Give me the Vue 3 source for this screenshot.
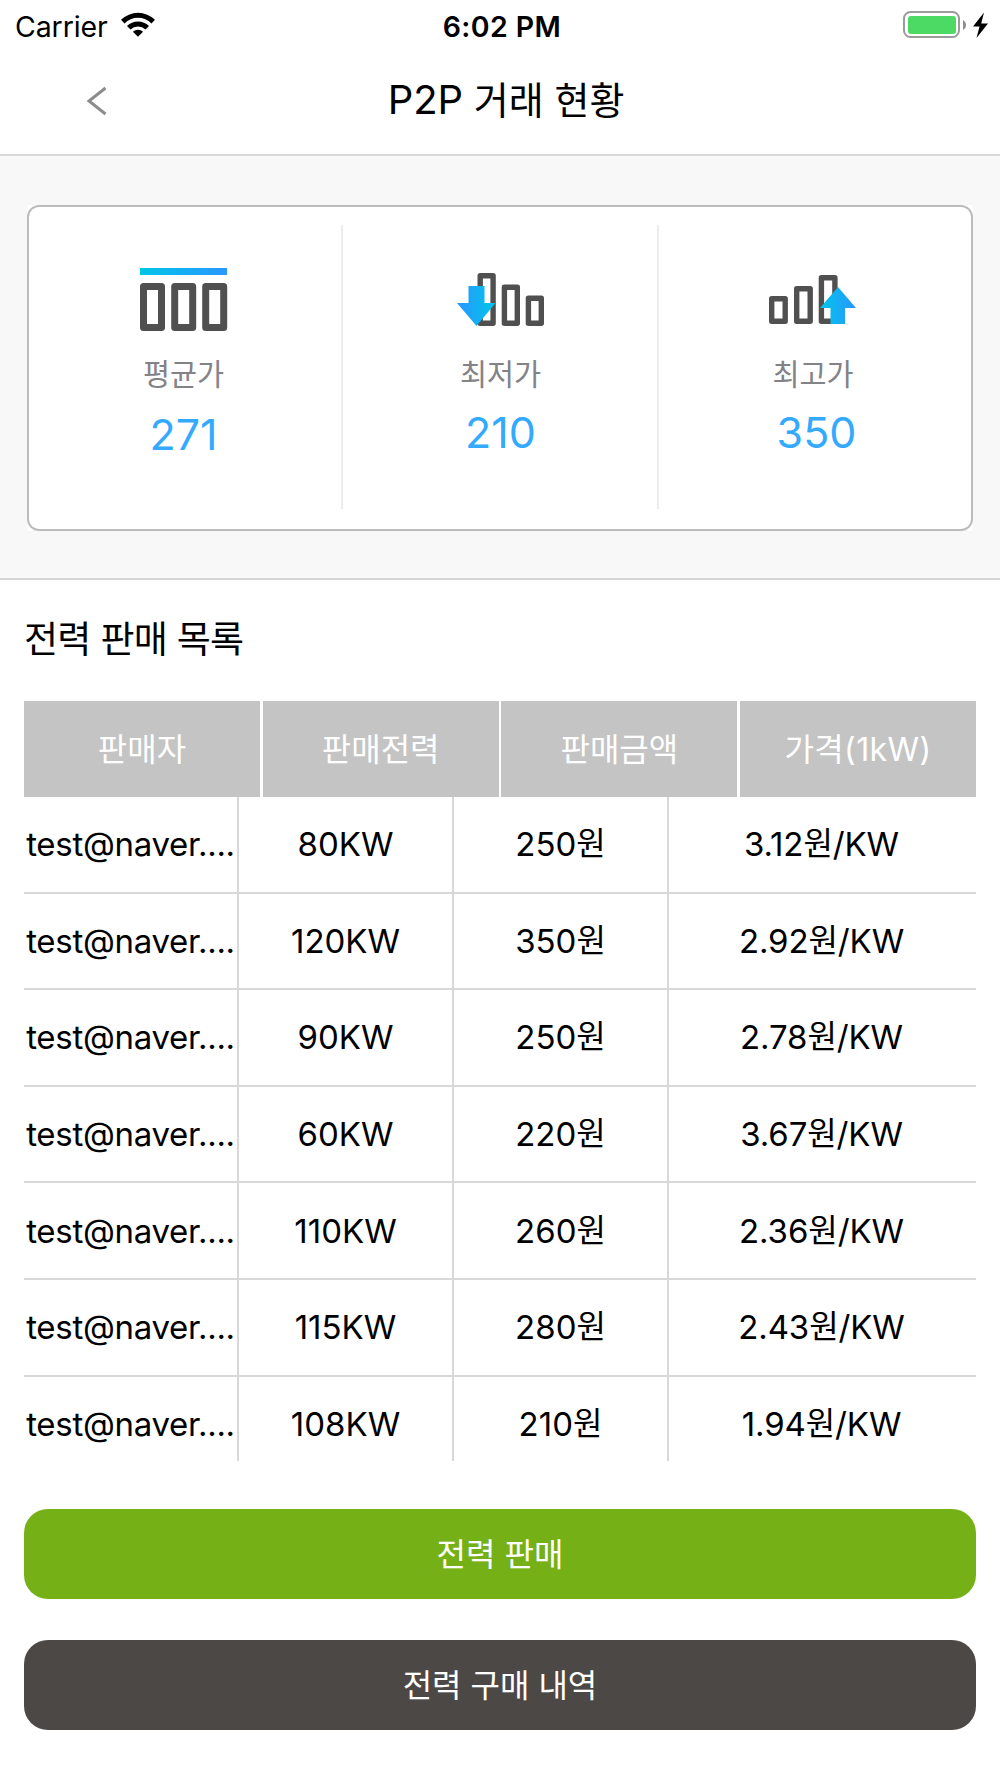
<template>
  <div class="screen">
    <div class="status">
      <div class="status__left">
        <span class="status__carrier">Carrier</span>
        <svg class="status__wifi" width="34" height="25" viewBox="0 0 34 25">
          <path d="M0 7.8A24.3 24.3 0 0 1 34 7.8L30.5 11.4A19.2 19.2 0 0 0 3.5 11.4Z" />
          <path d="M6 14A15.7 15.7 0 0 1 28 14L24.5 17.6A10.7 10.7 0 0 0 9.5 17.6Z" />
          <path d="M11.9 19.8A7.4 7.4 0 0 1 22.1 19.8L17 24.8Z" />
        </svg>
      </div>
      <span class="status__time">6:02 PM</span>
      <div class="status__right">
        <svg width="86" height="30" viewBox="0 0 86 30">
          <rect x="1" y="2" width="55" height="25" rx="6.5" fill="#fff" stroke="#9b9b9b" stroke-width="2" />
          <rect x="5" y="6" width="48" height="18" rx="3" fill="#4cd964" />
          <path d="M60 10C64 12 64 18 60 20Z" fill="#8e8e8e" />
          <path d="M81 2.5L70 16.5H76.5L73.5 28L85 13.5H78.2Z" fill="#000" />
        </svg>
      </div>
    </div>

    <header class="header">
      <button class="header__back" aria-label="뒤로">
        <svg width="22" height="30" viewBox="0 0 22 30">
          <path d="M19.5 2L3 15L19.5 28" fill="none" stroke="#8c8c8c" stroke-width="3" />
        </svg>
      </button>
      <h1 class="header__title"><span class="header__latin">P2P</span> 거래 현황</h1>
    </header>

    <section class="summary">
      <div class="summary__box">
        <div class="card">
          <div class="card__col card__col--avg">
            <svg class="card__icon" width="88" height="66" viewBox="0 0 88 66">
              <defs>
                <linearGradient id="avgFill">
                  <stop offset="0" stop-color="#00c6e8" />
                  <stop offset="1" stop-color="#2a96ff" />
                </linearGradient>
              </defs>
              <rect x="0" y="0" width="87" height="7" fill="url(#avgFill)" />
              <g fill="none" stroke="#505050" stroke-width="7" stroke-linejoin="round">
                <rect x="3.5" y="18.5" width="18" height="41" />
                <rect x="34.7" y="18.5" width="18" height="41" />
                <rect x="65.7" y="18.5" width="18" height="41" />
              </g>
            </svg>
            <span class="card__label">평균가</span>
            <strong class="card__value">271</strong>
          </div>

          <div class="card__col card__col--min">
            <svg class="card__icon" width="88" height="66" viewBox="0 0 88 66">
              <defs>
                <linearGradient id="minFill">
                  <stop offset="0" stop-color="#2a96ff" />
                  <stop offset="1" stop-color="#00c6e8" />
                </linearGradient>
              </defs>
              <g fill="none" stroke="#505050" stroke-width="5.4" stroke-linejoin="round">
                <rect x="23.2" y="7.7" width="12.9" height="47.6" />
                <rect x="47.4" y="19.2" width="12.9" height="36.1" />
                <rect x="71.4" y="30.2" width="12.9" height="25.1" />
              </g>
              <path d="M11.5 18H27.5V35H38.5L19.5 58L0 35H11.5Z" fill="url(#minFill)" />
            </svg>
            <span class="card__label">최저가</span>
            <strong class="card__value">210</strong>
          </div>

          <div class="card__col card__col--max">
            <svg class="card__icon" width="88" height="66" viewBox="0 0 88 66">
              <defs>
                <linearGradient id="maxFill">
                  <stop offset="0" stop-color="#00c6e8" />
                  <stop offset="1" stop-color="#2a96ff" />
                </linearGradient>
              </defs>
              <g fill="none" stroke="#505050" stroke-width="5.4" stroke-linejoin="round">
                <rect x="2.7" y="30.7" width="13.5" height="22.6" />
                <rect x="27.7" y="20.7" width="13.5" height="32.6" />
                <rect x="52.4" y="9.7" width="13.5" height="43.6" />
              </g>
              <path d="M69 19L87 40H76V56H61.5V40H51Z" fill="url(#maxFill)" />
            </svg>
            <span class="card__label">최고가</span>
            <strong class="card__value">350</strong>
          </div>
        </div>
      </div>
    </section>

    <main class="list">
      <h2 class="list__title">전력 판매 목록</h2>

      <div class="list__head">
        <div v-for="column in columns" :key="column" class="list__th">{{ column }}</div>
      </div>

      <div class="list__body">
        <div v-for="(row, index) in rows" :key="index" class="list__row">
          <div class="list__cell list__cell--seller">{{ row.seller }}</div>
          <div class="list__cell">{{ row.power }}KW</div>
          <div class="list__cell">{{ row.price }}<span class="won">원</span></div>
          <div class="list__cell">{{ row.unit }}<span class="won">원</span>/KW</div>
        </div>
      </div>

      <button class="btn btn--sell">전력 판매</button>
      <button class="btn btn--history">전력 구매 내역</button>
    </main>
  </div>
</template>

<script setup>
const columns = ['판매자', '판매전력', '판매금액', '가격(1kW)']

const rows = [
  { seller: 'test@naver....', power: 80, price: 250, unit: '3.12' },
  { seller: 'test@naver....', power: 120, price: 350, unit: '2.92' },
  { seller: 'test@naver....', power: 90, price: 250, unit: '2.78' },
  { seller: 'test@naver....', power: 60, price: 220, unit: '3.67' },
  { seller: 'test@naver....', power: 110, price: 260, unit: '2.36' },
  { seller: 'test@naver....', power: 115, price: 280, unit: '2.43' },
  { seller: 'test@naver....', power: 108, price: 210, unit: '1.94' },
]
</script>

<style>
body {
  margin: 0;
  background: #fff;
}
</style>

<style scoped>
.screen {
  box-sizing: border-box;
  width: 1000px;
  height: 1778px;
  overflow: hidden;
  background: #fff;
  color: #000;
  font-family: Inter, 'Noto Sans CJK KR', sans-serif;
}

button {
  padding: 0;
  border: none;
  background: none;
  font-family: inherit;
}

/* ---------- status bar ---------- */
.status {
  display: grid;
  grid-template-columns: 1fr auto 1fr;
  align-items: center;
  height: 50px;
  padding: 0 11px 0 15px;
  box-sizing: border-box;
}

.status__left {
  display: flex;
  align-items: center;
  gap: 13px;
}

.status__carrier {
  padding-top: 2px;
  font-size: 28.5px;
  letter-spacing: -0.1px;
}

.status__wifi {
  display: block;
  margin-bottom: 2px;
}

.status__time {
  padding-top: 2px;
  font-size: 28.5px;
  font-weight: 600;
  letter-spacing: 0.4px;
}

.status__right {
  display: flex;
  justify-content: flex-end;
}

/* ---------- header ---------- */
.header {
  display: grid;
  grid-template-columns: 200px 1fr 200px;
  align-items: center;
  height: 106px;
  padding-bottom: 2px;
  box-sizing: border-box;
  border-bottom: 2px solid #d9d9d9;
}

.header__back {
  display: flex;
  padding-left: 86px;
}

.header__title {
  margin: 0;
  padding: 0 0 2px 12px;
  text-align: center;
  font-size: 38px;
  font-weight: 400;
  line-height: 60px;
}

.header__latin {
  font-size: 40px;
}

/* ---------- summary card ---------- */
.summary {
  box-sizing: border-box;
  height: 424px;
  padding: 49px 27px 0;
  border-bottom: 2px solid #d6d6d6;
  background: #f8f8f8;
}

.summary__box {
  background: #fff;
}

.card {
  display: grid;
  grid-template-columns: 314px 316px 1fr;
  box-sizing: border-box;
  height: 326px;
  padding: 18px 0 20px;
  border: 2px solid #bcbcbc;
  border-radius: 12px;
}

.card__col {
  display: flex;
  flex-direction: column;
  align-items: center;
  box-sizing: border-box;
  padding-top: 43px;
  border-right: 2px solid #ebebf0;
}

.card__col--avg {
  padding-right: 3px;
}

.card__col--min {
  padding-left: 1px;
}

.card__col--max {
  padding-right: 4px;
  border-right: none;
}

.card__icon {
  display: block;
}

.card__label {
  margin-top: 20px;
  color: #828287;
  font-size: 29.4px;
  line-height: 42px;
}

.card__value {
  margin-top: 12px;
  color: #34aaff;
  font-size: 43px;
  font-weight: 400;
  line-height: 52px;
}

.card__col--min .card__value,
.card__col--max .card__value {
  margin-top: 10px;
}

.card__col--max .card__value {
  padding-left: 7px;
}

/* ---------- sales list ---------- */
.list {
  padding: 0 24px;
}

.list__title {
  margin: 0;
  height: 121px;
  font-size: 37px;
  font-weight: 400;
  letter-spacing: -0.7px;
  line-height: 120px;
}

.list__head {
  display: grid;
  grid-template-columns: repeat(4, 1fr);
  gap: 2.6px;
  height: 96px;
}

.list__th {
  display: flex;
  align-items: center;
  justify-content: center;
  padding-bottom: 4px;
  background: #c4c4c4;
  color: #fff;
  font-size: 32px;
}

.list__th:last-child {
  letter-spacing: 0.4px;
}

.list__body {
  height: 664px;
  overflow: hidden;
}

.list__row {
  display: grid;
  grid-template-columns: 215px 215px 215px 1fr;
  box-sizing: border-box;
  height: 96.6px;
  border-bottom: 2px solid #d8d8d8;
}

.list__cell {
  display: flex;
  align-items: center;
  justify-content: center;
  border-right: 2px solid #d8d8d8;
  font-size: 33px;
  line-height: 44px;
  white-space: nowrap;
}

.list__cell--seller {
  letter-spacing: -0.3px;
}

.list__cell:last-child {
  padding-right: 2px;
  border-right: none;
  letter-spacing: -0.1px;
}

.won {
  font-size: 32px;
}

/* ---------- actions ---------- */
.btn {
  display: block;
  width: 100%;
  height: 90px;
  padding-bottom: 4px;
  border-radius: 24px;
  color: #fff;
  font-size: 32px;
}

.btn--sell {
  margin-top: 48px;
  background: #76b017;
}

.btn--history {
  margin-top: 41px;
  background: #4c4845;
}
</style>
